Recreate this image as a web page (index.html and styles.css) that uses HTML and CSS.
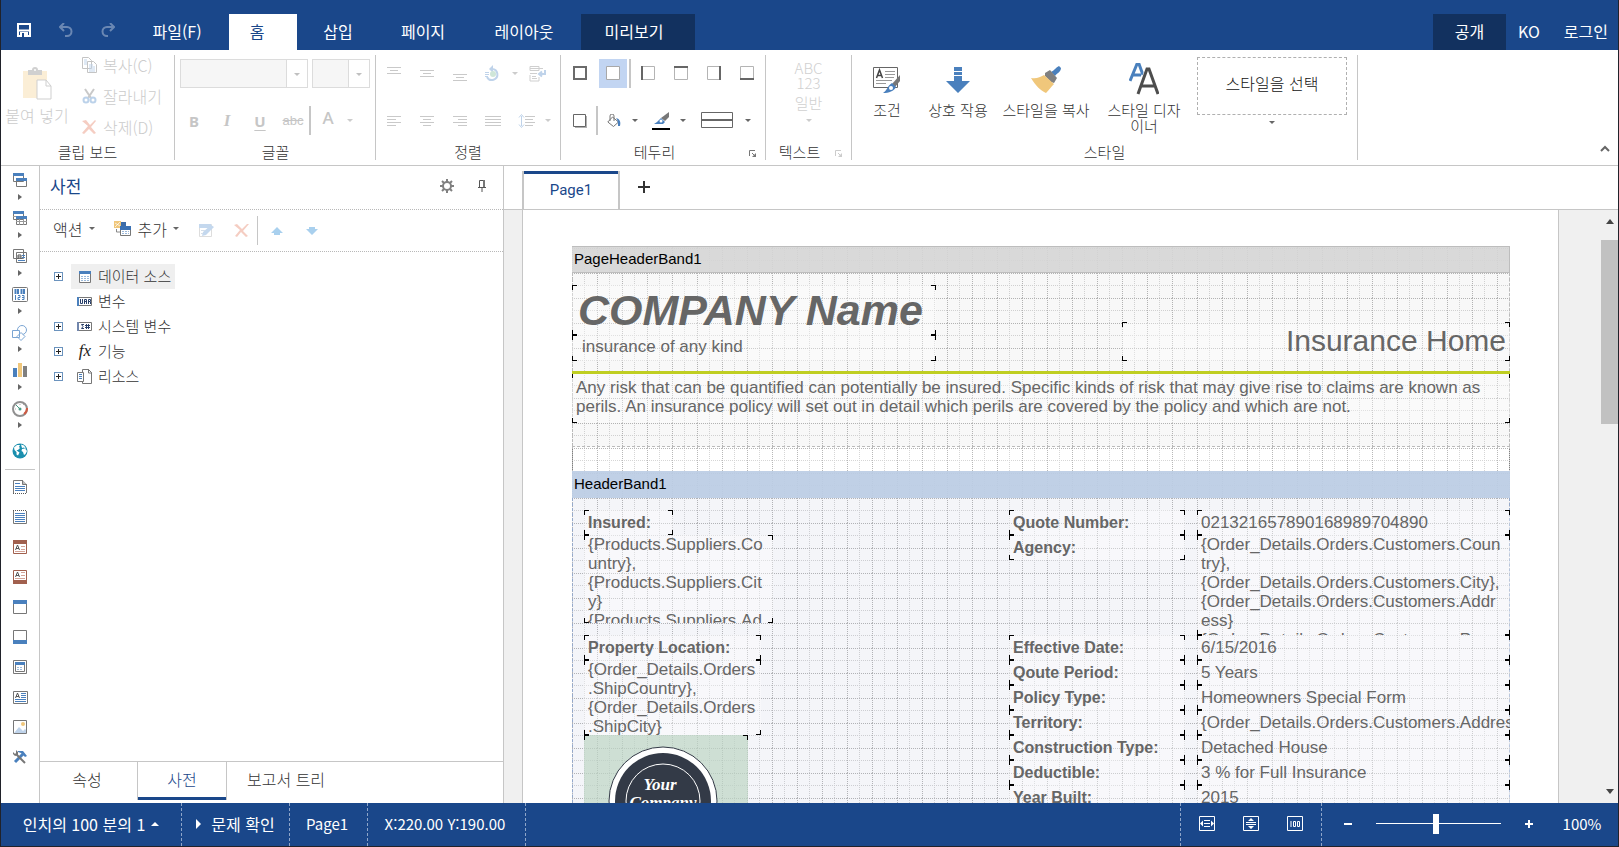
FILE: index.html
```html
<!DOCTYPE html>
<html lang="ko">
<head>
<meta charset="utf-8">
<title>Report Designer</title>
<link rel="stylesheet" href="styles.css">
</head>
<body>
<div class="app">

<header class="titlebar">
  <div class="quick">
    <button aria-label="저장"><svg width="14" height="14" viewBox="0 0 14 14"><path d="M1 1h12v12H1z" fill="none" stroke="#fff" stroke-width="2"/><path d="M1 7.500h12" stroke="#fff" stroke-width="2"/><path d="M3 9h8v4H3z" fill="#fff"/><path d="M5 10h2v4H5z" fill="#1a478a"/></svg></button>
    <button class="dim" aria-label="실행 취소"><svg width="14" height="15" viewBox="0 0 14 15"><path d="M5 0L1 4l4 4M1 4h7a4.500 4.500 0 0 1 0 9H6" fill="none" stroke="#fff" stroke-width="2"/></svg></button>
    <button class="dim" aria-label="다시 실행"><svg width="14" height="15" viewBox="0 0 14 15"><path d="M9 0l4 4-4 4M13 4H6a4.500 4.500 0 0 0 0 9h1" fill="none" stroke="#fff" stroke-width="2"/></svg></button>
  </div>
  <nav class="tabs">
    <button class="t-file">파일(F)</button>
    <button class="t-home on">홈</button>
    <button class="t-insert">삽입</button>
    <button class="t-page">페이지</button>
    <button class="t-layout">레이아웃</button>
    <button class="t-preview dark">미리보기</button>
  </nav>
  <div class="account">
    <button class="dark share">공개</button>
    <button>KO</button>
    <button>로그인</button>
  </div>
</header>

<section class="ribbon">
  <div class="group g-clip">
    <div class="clip-body">
      <button class="paste" disabled>
        <svg width="30" height="33" viewBox="0 0 30 33"><path d="M1 4h24v27H1z" fill="#fbeed6"/><path d="M6 8V3h4a3 3 0 0 1 6 0h4v5z" fill="#d0d0d0"/><circle cx="13" cy="3" r="1" fill="#fff"/><path d="M15 13h9l5 6v13H15z" fill="#fff" stroke="#cfcfcf"/><path d="M24 13v6h5" fill="none" stroke="#cfcfcf"/></svg>
        <span>붙여 넣기</span>
      </button>
      <div class="clip-list">
        <button disabled><svg width="15" height="16" viewBox="0 0 15 16"><path d="M.5 .5h6l3 3v8h-9zM5.500 4.500h6l3 3v8h-9z" fill="#fff" stroke="#c4c4c4"/><path d="M2 3h3M2 5h3M2 7h3M7 8h4M7 10h6M7 12h6M7 14h6" stroke="#bfd3ea"/></svg>복사(C)</button>
        <button disabled><svg width="15" height="16" viewBox="0 0 15 16"><path d="M3 1l6 9M12 1L6 10" stroke="#c9c9c9" stroke-width="2"/><circle cx="4" cy="12" r="2.500" fill="none" stroke="#bcd2ea" stroke-width="2"/><circle cx="11" cy="12" r="2.500" fill="none" stroke="#bcd2ea" stroke-width="2"/></svg>잘라내기</button>
        <button disabled><svg width="15" height="16" viewBox="0 0 15 16"><path d="M0 2l4-1 4 5 5-5 1 1-5 6 5 6-2 1-5-5-5 5-2-1 6-7z" fill="#f5cdc2"/></svg>삭제(D)</button>
      </div>
    </div>
    <div class="glabel">클립 보드</div>
  </div>

  <div class="group g-font">
    <div class="rows">
      <div class="combos"><select class="c-name" aria-label="글꼴 이름" disabled><option></option></select><select class="c-size" aria-label="글꼴 크기" disabled><option></option></select></div>
      <div class="tools off">
        <button disabled><b>B</b></button><button disabled><i class="serif">I</i></button><button disabled><b class="ul">U</b></button><button disabled><s>abc</s></button><span class="vsep"></span><button class="fontcolor" disabled>A</button><span class="dd"></span>
      </div>
    </div>
    <div class="glabel">글꼴</div>
  </div>

  <div class="group g-align">
    <div class="rows off">
      <div class="tools">
        <button disabled aria-label="위쪽 맞춤"><svg width="16" height="16"><path d="M1 1.500h14M4 4.500h8M1 7.500h14" stroke="#c9c9c9"/></svg></button>
        <button disabled aria-label="가운데 맞춤"><svg width="16" height="16"><path d="M1 4.500h14M4 7.500h8M1 10.500h14" stroke="#c9c9c9"/></svg></button>
        <button disabled aria-label="아래쪽 맞춤"><svg width="16" height="16"><path d="M1 8.500h14M4 11.500h8M1 14.500h14" stroke="#c9c9c9"/></svg></button>
        <button disabled aria-label="회전"><svg width="16" height="18" viewBox="0 0 16 18"><path d="M7 4a5.500 5.500 0 1 1-5 8" fill="none" stroke="#bfd3ea" stroke-width="2"/><path d="M8 0L4 4l4 4z" fill="#bfd3ea"/><path d="M0 7.500h4M0 9.500h4M0 11.500h3" stroke="#bfd3ea"/><circle cx="8" cy="9" r="3" fill="#cfe6d8"/></svg></button><span class="dd"></span>
        <button disabled aria-label="줄 바꿈"><svg width="18" height="16" viewBox="0 0 18 16"><path d="M1 .5h9v4H1zM1 7.500h7M1 9v6h9v-4M3 10.500h4M3 12.500h5M1 2.500h13" fill="none" stroke="#cfcfcf"/><path d="M16 4v4h-5M13 5.500l-3 2.500 3 2.500" fill="none" stroke="#bfd3ea" stroke-width="2"/></svg></button>
      </div>
      <div class="tools">
        <button disabled aria-label="왼쪽"><svg width="16" height="16"><path d="M1 3.500h14M1 6.500h9M1 9.500h14M1 12.500h9" stroke="#c9c9c9"/></svg></button>
        <button disabled aria-label="가운데"><svg width="16" height="16"><path d="M1 3.500h14M4 6.500h8M1 9.500h14M4 12.500h8" stroke="#c9c9c9"/></svg></button>
        <button disabled aria-label="오른쪽"><svg width="16" height="16"><path d="M1 3.500h14M6 6.500h9M1 9.500h14M6 12.500h9" stroke="#c9c9c9"/></svg></button>
        <button disabled aria-label="양쪽"><svg width="16" height="16"><path d="M0 3.500h16M0 6.500h16M0 9.500h16M0 12.500h16" stroke="#c9c9c9"/></svg></button>
        <button disabled aria-label="줄 간격"><svg width="17" height="16"><path d="M3.500 3v10M1 4.500l2.500-3 2.500 3M1 11.500l2.500 3 2.500-3" fill="none" stroke="#bfd3ea"/><path d="M7 3.500h10M7 6.500h8M7 9.500h10M7 12.500h8" stroke="#c9c9c9"/></svg></button><span class="dd"></span>
      </div>
    </div>
    <div class="glabel">정렬</div>
  </div>

  <div class="group g-border">
    <div class="rows">
      <div class="tools">
        <button aria-label="모든 테두리"><svg width="14" height="15"><path d="M1 1h12v12H1z" fill="none" stroke="#6b6b6b" stroke-width="2"/></svg></button>
        <button class="sel" aria-label="테두리 없음"><svg width="14" height="15"><path d="M.500 .500h13v13H.500z" fill="#fff" stroke="#a8a8a8"/></svg></button><span class="vsep"></span>
        <button aria-label="왼쪽 테두리"><svg width="14" height="15"><path d="M.500 .500h13v13H.500z" fill="none" stroke="#b4b4b4"/><path d="M1 0v14" stroke="#666" stroke-width="2"/></svg></button>
        <button aria-label="위쪽 테두리"><svg width="14" height="15"><path d="M.500 .500h13v13H.500z" fill="none" stroke="#b4b4b4"/><path d="M0 1h14" stroke="#666" stroke-width="2"/></svg></button>
        <button aria-label="오른쪽 테두리"><svg width="14" height="15"><path d="M.500 .500h13v13H.500z" fill="none" stroke="#b4b4b4"/><path d="M13 0v14" stroke="#666" stroke-width="2"/></svg></button>
        <button aria-label="아래쪽 테두리"><svg width="14" height="15"><path d="M.500 .500h13v13H.500z" fill="none" stroke="#b4b4b4"/><path d="M0 13h14" stroke="#666" stroke-width="2"/></svg></button>
      </div>
      <div class="tools row2">
        <button aria-label="그림자"><svg width="14" height="14"><path d="M2 2h12v12H2z" fill="#b0b0b0"/><path d="M.500 .500h12v12H.500z" fill="#fff" stroke="#666"/></svg></button><span class="vsep"></span>
        <button class="fill" aria-label="채우기"><svg width="14" height="14" viewBox="0 0 14 14"><path d="M5.500 3l6 5-5 4.500L.800 8z" fill="#fff" stroke="#777"/><path d="M3 7V2a1.500 1.500 0 0 1 4 0v5" fill="none" stroke="#777"/><path d="M9 4c4 1 5 4 4 8l-2 0c0-3 0-6-2-8z" fill="#4a80bd"/></svg></button><span class="dd"></span>
        <button class="pen" aria-label="테두리 색"><svg width="18" height="18" viewBox="0 0 18 18"><path d="M17 0v5l-4 4-4-3z" fill="#777"/><path d="M9 6l4 4-2 2H2l3-2z" fill="#4a80bd"/><circle cx="9" cy="9" r="1.500" fill="#fff"/><path d="M0 16h18v2H0z" fill="#000"/></svg></button><span class="dd"></span>
        <button class="wide" aria-label="테두리 스타일"><svg width="32" height="17"><path d="M.500 .500h31v15H.500z" fill="#fff" stroke="#666"/><path d="M0 8h32" stroke="#666" stroke-width="2"/></svg></button><span class="dd"></span>
      </div>
    </div>
    <div class="glabel">테두리<svg class="launch" width="8" height="8"><path d="M.500 6V.500H6" fill="none" stroke="#777"/><path d="M3 3l3 3" stroke="#777"/><path d="M7 3v4H3z" fill="#777"/></svg></div>
  </div>

  <div class="group g-text off">
    <button class="fmt" disabled><span>ABC</span><span>123</span><span class="fmt-name">일반</span><span class="dd"></span></button>
    <div class="glabel">텍스트<svg class="launch" width="8" height="8"><path d="M.500 6V.500H6" fill="none" stroke="#ccc"/><path d="M3 3l3 3" stroke="#ccc"/><path d="M7 3v4H3z" fill="#ccc"/></svg></div>
  </div>

  <div class="group g-style">
    <div class="styles">
      <button class="s1"><svg width="28" height="28" viewBox="0 0 28 28"><path d="M.500 1.500h24v20H.500z" fill="#fff" stroke="#666"/><path d="M12 5.500h10M12 8.500h10M12 11.500h9M3 14.500h16M3 17.500h10" stroke="#999"/><path d="M3.500 12L6.500 4l3 8M5 9.500h3.500" fill="none" stroke="#444" stroke-width="1.500"/><path d="M27 9v6l-5 6-3-3z" fill="#777"/><path d="M19 17l4 4c-2 4-7 6-13 6 4-2 4-7 9-10z" fill="#4a80bd"/><circle cx="18" cy="22" r="2" fill="#fff"/></svg><span>조건</span></button>
      <button class="s2"><svg width="24" height="28" viewBox="0 0 24 28"><path d="M8 1h8v4H8zM8 6h8v3H8zM8 10h8v5h8L12 27 0 15h8z" fill="#4a80bd"/></svg><span>상호 작용</span></button>
      <button class="s3"><svg width="30" height="28" viewBox="0 0 30 28"><path d="M28 0l2 2c0 4-4 5-6 8l-4-4c3-1 5-5 8-6z" fill="#4a80bd"/><path d="M14 7l5-3 7 8-3 5-3-1-6-6z" fill="#808080"/><path d="M0 12c6 1 9-1 13-3l10 9c-3 3-5 6-8 9-5-2-11-8-15-15z" fill="#f0c77b"/></svg><span>스타일을 복사</span></button>
      <button class="s4"><svg width="30" height="32" viewBox="0 0 30 32"><path d="M1 18L8 1h2l4 11M4 12h8" fill="none" stroke="#4a80bd" stroke-width="3"/><path d="M9 31L19 5h1l9 26M12 23h14" fill="none" stroke="#fff" stroke-width="5"/><path d="M9 31L18 6h2l9 25M12 23h14" fill="none" stroke="#4d4d4d" stroke-width="3"/></svg><span>스타일 디자<br>이너</span></button>
      <button class="picker"><span class="picker-box">스타일을 선택</span><span class="dd"></span></button>
    </div>
    <div class="glabel">스타일</div>
  </div>
  <button class="collapse" aria-label="리본 접기"><svg width="10" height="8"><path d="M1 6l4-4 4 4" fill="none" stroke="#666" stroke-width="2"/></svg></button>
</section>

<main class="work">
  <aside class="toolbox">
    <button class="fly" aria-label="밴드"><svg width="14" height="14"><path d="M.500 .500h10v8H.500zM3.500 5.500h10v8h-10z" fill="#fff" stroke="#777"/><path d="M0 0h11v3H0zM3 5h11v3H3z" fill="#4a80bd"/></svg></button>
    <button class="fly" aria-label="크로스 밴드"><svg width="14" height="14"><path d="M.500 .500h10v8H.500zM3.500 5.500h10v8h-10z" fill="#fff" stroke="#777"/><path d="M0 0h11v3H0zM3 5h11v3H3z" fill="#4a80bd"/><path d="M6.500 8v6M10.500 8v6M3 10.500h11M0 5.500h3" stroke="#999"/></svg></button>
    <button class="fly" aria-label="구성 요소"><svg width="14" height="14"><path d="M.500 .500h10v9H.500zM3.500 3.500h10v10h-10z" fill="#fff" stroke="#777"/><path d="M5 10V6h3v4M5 8h3" fill="none" stroke="#555"/><path d="M9 6.500h3M9 8.500h3M5 11.500h7" stroke="#4a80bd"/></svg></button>
    <button class="fly" aria-label="바코드"><svg width="16" height="16"><rect x=".5" y=".5" width="15" height="14" rx="1" fill="#fff" stroke="#777"/><path d="M3.500 2v5M6 2v5M9.500 2v5M12 2v5" stroke="#4a80bd" stroke-width="2"/><path d="M3.500 8v5M6 8.500h2v2H6v2h2M10 8.500h2v4h-2M10 10.500h2" fill="none" stroke="#4a80bd"/></svg></button>
    <button class="fly" aria-label="도형"><svg width="16" height="16"><circle cx="10" cy="5" r="4.500" fill="#fff" stroke="#7ba5d3"/><path d="M.500 5.500h7v7h-7zM9 7.500l4 4-4 4-4-4z" fill="#fff" stroke="#7ba5d3"/></svg></button>
    <button class="fly" aria-label="차트"><svg width="14" height="14"><path d="M0 5h4v9H0z" fill="#4a80bd"/><path d="M5 0h4v14H5z" fill="#f0c77b"/><path d="M10 3h4v11h-4z" fill="#808080"/></svg></button>
    <button class="fly" aria-label="게이지"><svg width="16" height="16"><circle cx="8" cy="8" r="7" fill="#fff" stroke="#909090" stroke-width="2"/><path d="M8 3v1M3 8h1M11 4l1-1" stroke="#aaa"/><path d="M15 7a7 7 0 0 1-3 6" fill="none" stroke="#cf5b43" stroke-width="2"/><path d="M4 4l4 4" stroke="#4a9a85"/><circle cx="8" cy="8" r="1.500" fill="#4a9a85"/></svg></button>
    <button class="map" aria-label="지도"><svg width="16" height="16"><circle cx="8" cy="8" r="7.500" fill="#1b8fae"/><path d="M2 4.500L5 2l3 0-1 2 1 1-2 2H4.500L6 8.500l1.500 1-1.500 3-1.500-1V9L2.500 7zM9 1.500l3 1 2 3-1 0-1-1-2 .5zM10 6l3-.5 2 2.500-1.500 3-1.500 1-1-3-1.500-1z" fill="#fff"/></svg></button>
    <hr>
    <button class="band" aria-label="보고서 제목"><svg width="14" height="14"><path d="M.500 13V.500h9l4 4V13" fill="#fff" stroke="#777"/><path d="M9.500 0v4.500H14" fill="#bbb" stroke="#777"/><path d="M2 3.500h5M2 6.500h10M2 8.500h10M2 10.500h10" stroke="#4a80bd"/><path d="M0 13.500h14" stroke="#555" stroke-dasharray="1 1"/></svg></button>
    <button class="band" aria-label="보고서 요약"><svg width="14" height="14"><path d="M.500 1v12.500h13V1" fill="#fff" stroke="#777"/><path d="M2 3.500h10M2 5.500h10M2 7.500h10M2 9.500h10M2 11.500h10" stroke="#4a80bd"/><path d="M0 .500h14" stroke="#555" stroke-dasharray="1 1"/></svg></button>
    <button class="band" aria-label="페이지 머리글"><svg width="14" height="14"><path d="M.500 .500h13v13H.500z" fill="#fff" stroke="#a1604e"/><path d="M0 0h14v4H0z" fill="#a1604e"/><path d="M2.500 10l2-5 2 5M3 8.500h3" fill="none" stroke="#555"/><path d="M8 6.500h4M8 9.500h4M2 11.500h10" stroke="#d3a397"/></svg></button>
    <button class="band" aria-label="페이지 바닥글"><svg width="14" height="14"><path d="M.500 .500h13v13H.500z" fill="#fff" stroke="#a1604e"/><path d="M0 10h14v4H0z" fill="#a1604e"/><path d="M2.500 7l2-5 2 5M3 5.500h3" fill="none" stroke="#555"/><path d="M8 2.500h4M8 5.500h4M2 8.500h10" stroke="#d3a397"/></svg></button>
    <button class="band" aria-label="머리글"><svg width="14" height="14"><path d="M.500 .500h13v13H.500z" fill="#fff" stroke="#777"/><path d="M0 0h14v4H0z" fill="#4a80bd"/></svg></button>
    <button class="band" aria-label="바닥글"><svg width="14" height="14"><path d="M.500 .500h13v13H.500z" fill="#fff" stroke="#777"/><path d="M0 10h14v4H0z" fill="#4a80bd"/></svg></button>
    <button class="band" aria-label="데이터"><svg width="14" height="14"><path d="M.500 .500h13v13H.500z" fill="#fff" stroke="#777"/><path d="M2.500 2.500h9v9h-9z" fill="#fff" stroke="#777"/><path d="M2 2h10v3H2z" fill="#4a80bd"/><path d="M4 7.500h6M4 9.500h6" stroke="#9bb9da" stroke-dasharray="2 1"/></svg></button>
    <button class="band" aria-label="텍스트"><svg width="15" height="13"><path d="M.500 .500h14v12H.500z" fill="#fff" stroke="#777"/><path d="M2.500 7l2-5 2 5M3 5.500h3" fill="none" stroke="#555"/><path d="M8 2.500h5M8 4.500h5M8 6.500h5M2 8.500h11M2 10.500h11" stroke="#4a80bd"/></svg></button>
    <button class="band" aria-label="이미지"><svg width="14" height="14"><path d="M.500 .500h13v13H.500z" fill="#fff" stroke="#777"/><path d="M1 13l5-6 4 4 2-2 1 1v3z" fill="#bfd3ea"/><circle cx="10" cy="4" r="2" fill="#f0c77b"/></svg></button>
    <button class="band" aria-label="도구"><svg width="16" height="14" viewBox="0 0 16 14"><path d="M3 12L11 4" stroke="#4a80bd" stroke-width="3"/><path d="M6 1h5l4 5-2 1-4-4-3-1z" fill="#4a80bd"/><path d="M4 4l9 9" stroke="#777" stroke-width="2"/><path d="M1 2v2l2 2 3-1V2L4 0v3L3 4z" fill="#777"/></svg></button>
  </aside>

  <section class="dict">
    <header class="dict-head"><h2>사전</h2>
      <button aria-label="설정"><svg width="14" height="14" viewBox="0 0 14 14"><circle cx="7" cy="7" r="4" fill="none" stroke="#808080" stroke-width="2"/><path d="M7 0v3M7 11v3M0 7h3M11 7h3M2 2l2 2M10 10l2 2M12 2l-2 2M4 10l-2 2" stroke="#808080" stroke-width="2"/></svg></button>
      <button aria-label="고정"><svg width="8" height="12" viewBox="0 0 8 12"><path d="M1.500 7V.500h4V7M0 7.500h8M4 8v4" fill="none" stroke="#555"/><path d="M5 0h2v7H5z" fill="#777"/></svg></button>
    </header>
    <div class="dict-tools">
      <button class="txt">액션<span class="dd"></span></button>
      <button class="txt add"><svg width="17" height="17" viewBox="0 0 17 17"><path d="M0 1h7v7H0z" fill="#f0c77b"/><path d="M1 3l5 3M6 2L1 7" stroke="#fff" stroke-width=".7"/><path d="M7 2h5v4H7z" fill="#3d6ca8"/><path d="M2.500 9v3H6" fill="none" stroke="#888"/><path d="M6.500 6.500h10v9h-10z" fill="#fff" stroke="#777"/><path d="M6 6h11v4H6z" fill="#3b71b3"/><path d="M8 11.500h7M8 13.500h7" stroke="#9bb9da" stroke-dasharray="2 1"/></svg>추가<span class="dd"></span></button>
      <button class="ic" disabled aria-label="편집"><svg width="15" height="14"><path d="M.500 .500h12v12H.500z" fill="#fff" stroke="#ddd"/><path d="M0 0h12v4H0z" fill="#c4d8ee"/><path d="M3 12l1-4 8-7 3 2-8 8z" fill="#c4d8ee"/><path d="M2 6.500h4M2 9.500h2" stroke="#d5dfea"/></svg></button>
      <button class="ic" disabled aria-label="삭제"><svg width="15" height="15"><path d="M0 2l3-1 5 5 5-5 2 0-6 7 5 5-2 1-5-5-4 5-2-1 5-6z" fill="#f5cdc2"/></svg></button>
      <span class="vsep"></span>
      <button class="ic" disabled aria-label="위로"><svg width="12" height="8"><path d="M6 0l6 6H9v2H3V6H0z" fill="#a9d0ee"/></svg></button>
      <button class="ic" disabled aria-label="아래로"><svg width="12" height="8"><path d="M6 8l6-6H9V0H3v2H0z" fill="#a9d0ee"/></svg></button>
    </div>
    <ul class="tree">
      <li><button class="exp" aria-label="펼치기"></button><span class="node on"><svg width="16" height="14"><path d="M2.500 1.500h11v11h-11z" fill="#fff" stroke="#777"/><path d="M2 1h12v3H2z" fill="#4a80bd"/><path d="M4 6.500h8M4 8.500h8M4 10.500h8" stroke="#9bb9da" stroke-dasharray="2 1"/></svg>데이터 소스</span></li>
      <li><span class="noexp"></span><span class="node"><svg width="16" height="10"><path d="M.500 .500h14v8H.500z" fill="#fff" stroke="#777"/><path d="M0 0h2v9H0z" fill="#4a80bd"/><path d="M3.500 2v4.500h2V2M7.500 7V2.500h2V7M7 4.500h2M11.500 7V2.500h2v2h-2M13.500 5v2" fill="none" stroke="#29406a"/></svg>변수</span></li>
      <li><button class="exp" aria-label="펼치기"></button><span class="node"><svg width="16" height="10"><path d="M.500 .500h14v8H.500z" fill="#fff" stroke="#777"/><path d="M0 0h2v9H0z" fill="#7186ad"/><path d="M7 2.500H4.500l1.500 2-1.500 2H7M8 3.500h5M8 5.500h5M9.500 2v5M11.500 2v5" fill="none" stroke="#29406a"/></svg>시스템 변수</span></li>
      <li><button class="exp" aria-label="펼치기"></button><span class="node"><span class="fx">fx</span>기능</span></li>
      <li><button class="exp" aria-label="펼치기"></button><span class="node"><svg width="16" height="16"><path d="M5.500 .500h6l3 3v11h-9z" fill="#fff" stroke="#777"/><path d="M11.500 0v4H15" fill="none" stroke="#777"/><path d="M.500 3.500h6v9h-6z" fill="#fff" stroke="#777"/><path d="M2 5.500h3M2 7.500h3M2 9.500h3" stroke="#4a80bd"/></svg>리소스</span></li>
    </ul>
    <nav class="dict-tabs"><button class="d1">속성</button><button class="d2 on">사전</button><button class="d3">보고서 트리</button></nav>
  </section>

  <section class="design">
    <nav class="pages"><button class="page on">Page1</button><button class="plus" aria-label="페이지 추가"><svg width="12" height="12"><path d="M6 0v12M0 6h12" stroke="#333" stroke-width="2"/></svg></button></nav>
    <div class="view">
      <div class="sheet">
        <div class="surface">
          <svg class="grid" width="938" height="600">
            <defs><pattern id="g" width="25" height="25" patternUnits="userSpaceOnUse" y="2">
              <path d="M12.500 0v25M0 12.500h25" stroke="#d6d6d6" stroke-dasharray="1 1"/>
              <path d="M.500 0v25M0 .500h25" stroke="#b8b8b8" stroke-dasharray="1 1"/>
            </pattern></defs>
            <rect width="938" height="600" fill="url(#g)"/>
          </svg>
          <div class="bhead grey">PageHeaderBand1</div>
          <div class="bbody ph">
            <div class="comp company">COMPANY Name</div>
            <div class="comp kind">insurance of any kind</div>
            <div class="comp home">Insurance Home</div>
            <div class="comp risk">Any risk that can be quantified can potentially be insured. Specific kinds of risk that may give rise to claims are known as<br>perils. An insurance policy will set out in detail which perils are covered by the policy and which are not.</div>
            <div class="rule"></div>
          </div>
          <div class="spacer"></div>
          <div class="bhead blue">HeaderBand1</div>
          <div class="bbody hd">
            <div class="col c-left">
              <div class="comp lab w1">Insured:</div>
              <div class="comp multi w2">{Products.Suppliers.Co<br>untry},<br>{Products.Suppliers.Cit<br>y}<br>{Products.Suppliers.Ad</div>
              <div class="comp lab w3">Property Location:</div>
              <div class="comp multi w4">{Order_Details.Orders<br>.ShipCountry},<br>{Order_Details.Orders<br>.ShipCity}</div>
              <div class="comp logo"><svg width="163" height="163" viewBox="0 0 163 163"><circle cx="79" cy="66" r="54" fill="#fff" stroke="#333a47"/><circle cx="79" cy="66" r="48" fill="#333a47"/><circle cx="79" cy="66" r="37" fill="none" stroke="#fff"/><g class="script"><text x="76" y="55">Your</text><text x="79" y="73">Company</text></g></svg></div>
            </div>
            <div class="col c-lab">
              <div class="comp lab">Quote Number:</div><div class="comp lab">Agency:</div>
              <div class="comp lab eff">Effective Date:</div><div class="comp lab">Qoute Period:</div><div class="comp lab">Policy Type:</div><div class="comp lab">Territory:</div><div class="comp lab">Construction Type:</div><div class="comp lab">Deductible:</div><div class="comp lab">Year Built:</div>
            </div>
            <div class="col c-val">
              <div class="comp val">021321657890168989704890</div>
              <div class="comp multi addr">{Order_Details.Orders.Customers.Coun<br>try},<br>{Order_Details.Orders.Customers.City},<br>{Order_Details.Orders.Customers.Addr<br>ess}<br>{Order_Details.Orders.Customers.Pos</div>
              <div class="comp val">6/15/2016</div><div class="comp val">5 Years</div><div class="comp val">Homeowners Special Form</div><div class="comp val">{Order_Details.Orders.Customers.Address}</div><div class="comp val">Detached House</div><div class="comp val">3 % for Full Insurance</div><div class="comp val">2015</div>
            </div>
          </div>
        </div>
      </div>
      <div class="scroll"><span class="up"></span><span class="thumb"></span><span class="down"></span></div>
    </div>
  </section>
</main>

<footer class="status">
  <button class="units">인치의 100 분의 1<span class="tri-up"></span></button>
  <button class="check"><span class="tri-right"></span>문제 확인</button>
  <span class="cell pg">Page1</span>
  <span class="cell xy">X:220.00 Y:190.00</span>
  <span class="zoomfit">
    <button aria-label="너비 맞춤"><svg width="16" height="16"><path d="M.500 .500h15v14H.500z" fill="none" stroke="#fff"/><path d="M5 4.500h6M5 7.500h6M5 10.500h6" stroke="#fff"/><path d="M1 7.500l3-3v6zM15 7.500l-3-3v6z" fill="#fff"/></svg></button>
    <button aria-label="페이지 맞춤"><svg width="16" height="16"><path d="M.500 .500h15v14H.500z" fill="none" stroke="#fff"/><path d="M3 6.500h10M3 8.500h10" stroke="#fff"/><path d="M8 2l3 3H5zM8 13l3-3H5z" fill="#fff"/></svg></button>
    <button aria-label="100%"><svg width="16" height="16"><path d="M.500 .500h15v14H.500z" fill="none" stroke="#fff"/><path d="M4 5v6M6.500 5.500h2v5h-2zM10.500 5.500h2v5h-2z" fill="none" stroke="#fff"/></svg></button>
  </span>
  <span class="zoom">
    <button aria-label="축소"><svg width="8" height="8"><path d="M0 4h8" stroke="#fff" stroke-width="2"/></svg></button>
    <input type="range" min="0" max="200" value="96" aria-label="확대/축소">
    <button aria-label="확대"><svg width="8" height="8"><path d="M0 4h8M4 0v8" stroke="#fff" stroke-width="2"/></svg></button>
    <span class="pct">100%</span>
  </span>
</footer>
</div>
</body>
</html>
```
FILE: styles.css
```css
* { box-sizing: border-box; }
html, body { margin: 0; height: 100%; }
body {
  background: #20222a;
  font-family: "Noto Sans CJK KR", "Noto Sans", sans-serif;
  font-size: 15px;
  line-height: 20px;
  font-weight: 300;
  color: #333;
}
button {
  margin: 0; padding: 0; border: 0; background: none;
  font: inherit; color: inherit;
  display: flex; align-items: center; justify-content: center;
}
svg { display: block; flex: none; }
.app {
  height: 100vh;
  padding: 0 1px 1px;
  display: grid;
  grid-template-rows: 50px 116px minmax(0, 1fr) 43px;
}

/* Title bar */
.titlebar { background: #1a478a; color: #fff; display: flex; padding-top: 14px; font-size: 16px; font-weight: 400; }
.quick { display: flex; width: 124px; padding-left: 16px; gap: 28px; padding-bottom: 4px; }
.quick .dim { opacity: .35; }
.tabs { display: flex; flex: 1; }
.tabs button, .account button { padding-bottom: 2px; }
.tabs .on { background: #fff; color: #1a478a; padding-right: 12px; }
.dark { background: #12315f; }
.t-file { width: 104px; }
.t-home { width: 68px; }
.t-insert { width: 82px; }
.t-page { width: 88px; }
.t-layout, .t-preview { width: 114px; }
.t-preview { padding-right: 8px; }
.account { display: flex; padding-right: 10px; gap: 24px; }
.share { width: 73px; margin-right: -12px; }

/* Ribbon */
.ribbon { background: #fff; border-bottom: 1px solid #c6c6c6; display: flex; padding: 5px 0; position: relative; }
.group { border-right: 1px solid #c6c6c6; display: flex; flex-direction: column; justify-content: space-between; }
.glabel { text-align: center; height: 17px; line-height: 18px; position: relative; color: #333; padding-right: 4px; }
.launch { position: absolute; right: 8px; top: 7px; }
.off { color: #d0d0d0; }
.rows { display: flex; flex-direction: column; gap: 18px; padding-top: 4px; }
.tools { display: flex; align-items: center; gap: 5px; height: 29px; }
.tools button { width: 28px; height: 29px; }
.tools .sel { background: #c2d5f2; }
.vsep { width: 2px; height: 29px; margin: 0 -2px 0 -3px; background: #c6c6c6; }
.dd { width: 0; height: 0; border: 3px solid transparent; border-top-color: #666; border-bottom: 0; }
.off .dd { border-top-color: #ccc; }

.g-clip { width: 174px; }
.g-clip .glabel, .g-style .glabel { padding-right: 0; }
.clip-body { display: flex; color: #cbcbcb; }
.paste { width: 72px; height: 70px; flex-direction: column; justify-content: flex-end; gap: 5px; font-size: 16px; }
.clip-list { padding: 0 0 0 9px; display: flex; flex-direction: column; gap: 11px; }
.clip-list button { gap: 6px; justify-content: flex-start; font-size: 16px; }
.g-font { width: 201px; padding-left: 5px; }
.combos { display: flex; gap: 4px; height: 29px; position: relative; }
.combos select {
  appearance: none; height: 29px; border: 1px solid #dcdcdc; border-radius: 0; opacity: 1;
  background:
    linear-gradient(#fff, #fff) right / 20px 100% no-repeat,
    linear-gradient(#dcdcdc, #dcdcdc) right 20px top / 1px 100% no-repeat,
    #f6f6f6;
}
.combos::before, .combos::after {
  content: ""; position: absolute; top: 14px; border: 3px solid transparent; border-top-color: #c0c0c0; border-bottom: 0;
}
.combos::before { left: 114px; }
.combos::after { left: 176px; }
.c-name { width: 128px; }
.c-size { width: 58px; }
.tools b { font-family: "Noto Sans", sans-serif; font-weight: 700; }
.ul { text-decoration: underline; text-underline-offset: 3px; }
.serif { font-family: "Liberation Serif", serif; font-weight: bold; font-size: 17px; }
.g-font s { font-size: 13px; font-family: "Liberation Sans", sans-serif; }
.tools .fontcolor { padding-bottom: 6px; font: 500 17px "Noto Sans", sans-serif; }
.g-font .tools, .g-align .tools { color: #c6c6c6; }
.g-align { width: 185px; padding-left: 4px; }
.g-border { width: 205px; padding-left: 5px; }
.g-align .dd, .g-border .dd { margin-right: 1px; }
.g-border .tools .fill { width: 26px; }
.g-border .tools .wide { width: 38px; margin-left: 6px; }
.g-border .tools .wide + .dd { margin-left: 4px; }
.g-border .pen { margin-left: 3px; }
.g-border .glabel { padding-right: 22px; }
.g-text { width: 86px; }
.g-text .glabel { padding-right: 18px; }
.fmt { flex-direction: column; line-height: 15px; padding-top: 5px; justify-content: flex-start; }
.fmt-name { line-height: 26px; }
.fmt .dd { margin-top: 3px; }

.g-style { width: 506px; }
.styles { display: flex; height: 84px; line-height: 16px; align-items: flex-start; }
.styles button { flex-direction: column; justify-content: flex-start; padding-top: 11px; gap: 8px; }
.styles .s1 { width: 70px; }
.styles .s2 { width: 72px; }
.styles .s3 { width: 104px; }
.styles .s4 { width: 92px; padding-top: 8px; gap: 7px; }
.styles .picker { margin-left: 7px; padding-top: 2px; gap: 6px; color: #111; font-size: 16px; }
.picker-box { width: 150px; height: 58px; border: 1px dashed #b0b0b0; display: grid; place-items: center; padding-bottom: 6px; }
.collapse { position: absolute; right: 8px; bottom: 12px; }

/* Toolbox */
.work { background: #fff; display: grid; grid-template-columns: 39px 464px minmax(0, 1fr); min-height: 0; overflow: hidden; }
.toolbox { border-right: 1px solid #c6c6c6; padding-top: 3px; }
.toolbox button { width: 38px; }
.fly { height: 38px; flex-direction: column; justify-content: flex-start; padding-top: 4px; position: relative; }
.fly::after { content: ""; position: absolute; left: 17px; bottom: 7px; border: 3px solid transparent; border-left: 4px solid #666; border-right: 0; }
.map { height: 32px; }
.toolbox hr { margin: 2px 4px; border: 0; height: 1px; background: #c6c6c6; }
.band { height: 30px; }

/* Dictionary */
.dict { border-right: 1px solid #c6c6c6; display: flex; flex-direction: column; min-height: 0; }
.dict-head { height: 44px; border-bottom: 1px dotted #b8b8b8; display: flex; align-items: center; padding: 0 17px 4px 10px; gap: 24px; }
.dict-head h2 { flex: 1; margin: 0; font-size: 17px; font-weight: 400; color: #1a478a; }
.dict-tools { height: 42px; border-bottom: 1px dotted #b8b8b8; display: flex; align-items: center; padding-left: 13px; font-size: 16px; }
.dict-tools .txt { gap: 7px; padding-bottom: 4px; }
.dict-tools .add { margin: 0 10px 0 19px; gap: 6px; }
.dict-tools .ic { width: 35px; height: 29px; }
.dict-tools .vsep { width: 1px; margin: 0 2px 0 -2px; }
.tree { list-style: none; margin: 0; padding: 12px 0 0 14px; flex: 1; }
.tree li { display: flex; align-items: center; height: 25px; }
.exp { width: 9px; height: 9px; border: 1px solid #6b93be;
  background: linear-gradient(#222, #222) center / 5px 1px no-repeat, linear-gradient(#222, #222) center / 1px 5px no-repeat; }
.noexp { width: 9px; }
.node { margin-left: 8px; height: 25px; padding: 0 4px 2px 6px; display: flex; align-items: center; gap: 5px; }
.node svg { margin-top: 2px; }
.node.on { background: #efefef; }
.fx { font: italic 17px/20px "Liberation Serif", serif; width: 16px; text-align: center; color: #222; }
.dict-tabs { border-top: 1px solid #c6c6c6; height: 42px; display: flex; padding-bottom: 3px; font-size: 16px; }
.dict-tabs button { padding-bottom: 5px; }
.d1 { width: 97px; padding-right: 3px; }
.d2 { width: 90px; border: solid #c6c6c6; border-width: 0 1px; }
.d3 { padding-left: 20px; }
.dict-tabs .on { color: #1a478a; box-shadow: inset 0 -3px #1a478a; }

/* Design area */
.design { display: flex; flex-direction: column; min-height: 0; }
.pages { height: 44px; border-bottom: 1px solid #c6c6c6; padding: 5px 0 0 18px; display: flex; font-family: Roboto, sans-serif; }
.page { width: 98px; border: solid #c6c6c6; border-width: 0 2px; box-shadow: inset 0 3px #1a478a; color: #1a478a; font-weight: 400; }
.plus { width: 48px; padding-bottom: 7px; }
.view { flex: 1; min-height: 0; background: #f0f0f0; display: flex; justify-content: space-between; overflow: hidden; padding-left: 18px; }
.sheet { background: #fff; border: solid #c6c6c6; border-width: 0 1px; padding: 36px 48px 0 49px; overflow: hidden; }
.surface { position: relative; width: 938px; font-family: "Liberation Sans", Arial, sans-serif; font-weight: 400; color: #666; }
.grid { position: absolute; left: 0; top: 0; }
.bhead { position: relative; height: 27px; padding: 2px; color: #000; line-height: 22px; }
.grey { background: rgba(213, 213, 213, .9); border: 1px solid #bdbdbd; border-width: 1px 1px 1px 0; padding-top: 1px; }
.blue { background: rgba(187, 204, 228, .92); }
.bbody { position: relative; }
.ph { height: 174px; background: rgba(0, 0, 0, .027); border: dashed #bbb; border-width: 0 1px 1px; }
.spacer { height: 24px; border: solid #808080; border-width: 0 1px; }
.hd { height: 400px; background: rgba(60, 90, 160, .06); border: dashed #94a9cc; border-width: 0 1px; }
.comp {
  background:
    linear-gradient(#000, #000) 0 0 / 5px 1px, linear-gradient(#000, #000) 0 0 / 1px 5px,
    linear-gradient(#000, #000) 100% 0 / 5px 1px, linear-gradient(#000, #000) 100% 0 / 1px 5px,
    linear-gradient(#000, #000) 0 100% / 5px 1px, linear-gradient(#000, #000) 0 100% / 1px 5px,
    linear-gradient(#000, #000) 100% 100% / 5px 1px, linear-gradient(#000, #000) 100% 100% / 1px 5px,
    rgba(255, 255, 255, .35);
  background-repeat: no-repeat;
  overflow: hidden; white-space: nowrap;
  font-size: 17px; line-height: 19px; padding: 0 4px;
}
.company, .kind, .home, .risk, .rule, .col { position: absolute; }
.company { left: -1px; top: 12px; width: 364px; height: 50px; font: italic bold 43px/50px "Liberation Sans", sans-serif; padding-left: 6px; }
.kind { left: -1px; top: 62px; width: 364px; height: 26px; line-height: 24px; padding-left: 10px; }
.home { left: 549px; top: 49px; width: 388px; height: 39px; font-size: 30px; line-height: 37px; text-align: right; }
.risk { left: -1px; top: 100px; width: 938px; height: 50px; padding-top: 5px; }
.rule { left: -1px; top: 98px; width: 938px; height: 3px; background: #bfce21; }
.col { top: 12px; display: flex; flex-direction: column; align-items: flex-start; }
.c-left { left: 11px; }
.c-lab { left: 436px; width: 176px; align-items: stretch; }
.c-val { left: 624px; width: 313px; align-items: stretch; }
.lab, .val { height: 25px; line-height: 25px; flex: none; }
.lab { font-size: 16px; font-weight: bold; }
.w1 { width: 89px; }
.w2 { width: 189px; height: 88px; }
.w3 { width: 177px; margin-top: 12px; }
.w4 { width: 177px; height: 75px; }
.logo { width: 164px; height: 163px; padding: 0; background-color: rgba(190, 214, 196, .7); }
.script { font: italic bold 17px "Liberation Serif", serif; fill: #fff; text-anchor: middle; }
.eff { margin-top: 75px; }
.addr { height: 100px; }

.scroll { width: 17px; display: flex; flex-direction: column; align-items: center; padding: 9px 0; }
.up, .down { border: 4px solid transparent; }
.up { border-bottom: 5px solid #444; border-top: 0; }
.down { border-top: 5px solid #444; border-bottom: 0; margin-top: auto; }
.thumb { width: 17px; height: 184px; background: #c1c1c1; margin-top: 16px; }

/* Status bar */
.status { background: #1a478a; color: #fff; display: flex; font-size: 15px; font-weight: 400; }
.status > * { border-right: 1px dashed #8fa6c9; display: flex; align-items: center; justify-content: center; padding-bottom: 2px; }
.units { width: 181px; gap: 6px; font-size: 16px; }
.check { width: 108px; gap: 10px; font-size: 16px; }
.pg { width: 78px; padding-right: 3px; }
.xy { width: 158px; padding-right: 3px; }
.tri-up { border: 4px solid transparent; border-bottom-color: #fff; border-top: 0; }
.tri-right { border: 5px solid transparent; border-left-color: #fff; border-right: 0; }
.zoomfit { margin-left: auto; width: 142px; gap: 28px; border-left: 1px dashed #8fa6c9; }
.status .zoom { width: 296px; border: 0; gap: 24px; padding-left: 5px; }
.zoom input { appearance: none; width: 125px; height: 22px; margin: 0; background: linear-gradient(#fff, #fff) center / 100% 1px no-repeat; }
.zoom input::-webkit-slider-thumb { appearance: none; width: 6px; height: 20px; background: #fff; }
.pct { margin-left: 6px; }
```
